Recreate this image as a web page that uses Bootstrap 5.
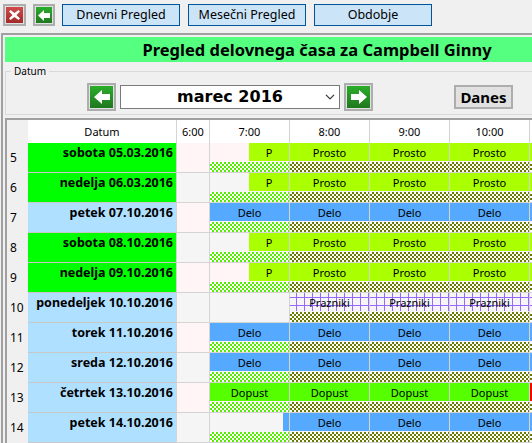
<!DOCTYPE html>
<html lang="sl">
<head>
<meta charset="utf-8">
<title>Pregled delovnega časa</title>
<link rel="stylesheet" href="https://cdn.jsdelivr.net/npm/bootstrap@5.3.0/dist/css/bootstrap.min.css">
<style>
html,body{height:443px;overflow:hidden}
body{background:#f0f0f0;font-family:"Noto Sans",sans-serif;font-size:11px;color:#000;width:532px}
.toolbar{height:33px;padding:4px 0 0 3px}
.icon-tile{display:flex;align-items:center;justify-content:center;border:2px solid #adadad;padding:1px;background:#e1e1e1;border-radius:0}
.icon-tile span{display:flex;align-items:center;justify-content:center;width:100%;height:100%}
.tile-close{width:23px;height:22px;margin-right:7px}
.tile-close span{background:linear-gradient(#d24a4a,#a32a2a)}
.tile-back{width:22px;height:22px;margin-right:7px}
.tile-back span,.tile-nav span{background:linear-gradient(#2bad2b,#1f781f)}
.view-btn{width:118px;height:22px;margin-right:8px;padding:0;background:#cce4f7;border:1px solid #005499;border-radius:0;color:#000;font-size:12.500px;line-height:18px;font-family:"Noto Sans",sans-serif}
.frame{border-top:2px solid #a0a0a0;border-left:2px solid #a0a0a0;margin-left:1px;padding:2px 0 0 2px}
.title-strip{height:25px;background:#55ff80;font-weight:700;font-size:16.500px;line-height:25px;text-align:center;padding-left:97px;white-space:nowrap}
.date-set{margin:3px 0 0;border:1px solid #d9d9d9;border-right:0;height:50px;padding:0;min-width:0;display:block}
.date-set legend{float:none;width:auto;font-size:10px;line-height:13px;margin:0 0 0 5px;padding:0 3px}
.nav-line{height:30px;margin-top:4px;padding-left:81px}
.tile-nav{width:29px;height:28px}
.month-pick{width:220px;height:24px;margin:0 4px;padding:0;border:1px solid #7a7a7a;border-radius:0;font-family:"DejaVu Sans",sans-serif;font-weight:700;font-size:16px;line-height:22px;text-align:center;text-align-last:center;color:#000;background-position:right 3px center;background-size:12px 10px}
.today-btn{width:59px;height:24px;margin-left:81px;padding:0;background:#e1e1e1;border:2px solid #adadad;border-radius:0;font-family:"Noto Sans",sans-serif;font-weight:700;font-size:15px;line-height:19px;color:#000}
.sched{margin:3px 0 0;border-top:2px solid #a0a0a0;border-left:2px solid #a0a0a0;height:326px}
.sched-row{display:grid;grid-template-columns:21px 149px 33px 80px 80px 80px 80px 3px;height:30px}
.sched-row.head{height:23px}
.hd{background:#fff;border-right:1px solid #d4d4d4;text-align:center;line-height:23px;font-size:11px}
.hd0{background:#f0f0f0;border-right:0}
.num{font-size:12px;padding:8px 0 0 3px;line-height:14px}
.day{border-right:1px solid #d4d4d4;border-bottom:1px solid #c8c8c8;font-weight:700;font-size:12.500px;line-height:15px;padding:2px 3px 0 0;text-align:right;white-space:nowrap;overflow:hidden}
.day-w{background:#00ff00}
.day-b{background:#b0e0ff}
.slot{border-right:1px solid #d4d4d4;border-bottom:1px solid #d4d4d4;display:flex;flex-direction:column;overflow:hidden;min-width:0}
.slot-end{border-right:0}
.pink .slot{background:#fff5f7}
.grey .slot{background:#f5f5f5}
.bar{height:18px;line-height:19px;text-align:center;white-space:nowrap;font-size:11px}
.bar-free{background:#aaff00}
.bar-work{background:#55aaff}
.bar-off{background:#55ff00}
.bar-red{background:#ff0000}
.bar-hol{background-color:#f5f5f5;background-image:linear-gradient(90deg,#9966ff 1px,transparent 1px),linear-gradient(#9966ff 1px,transparent 1px);background-size:8px 100%,100% 8px;background-position:6px 0,0 4px}
.part{display:flex;height:18px}
.part .fill{flex:1 1 auto}
.part-p{width:40px}
.part-d{width:6px}
.hatch{height:10px;margin-top:auto;background-color:#fff;background-image:repeating-conic-gradient(var(--hc) 0 25%,#fff 0 50%);background-size:4px 4px}
.h-g{--hc:#55ee00}
.h-o{--hc:#6b7a00}
</style>
</head>
<body>
<div class="toolbar d-flex">
  <button type="button" class="icon-tile tile-close" aria-label="Zapri"><span><svg width="13" height="12" viewBox="0 0 13 12"><path d="M1 2.500 2.500 1l4 3 4-3L12 2.500 8.500 6l3.500 3.500L10.500 11l-4-3-4 3L1 9.500 4.500 6z" fill="#fff"/></svg></span></button>
  <button type="button" class="icon-tile tile-back" aria-label="Nazaj"><span><svg width="12" height="11" viewBox="0 0 12 11"><path d="M0 5.500 6 0v3h6v5H6v3z" fill="#fff"/></svg></span></button>
  <button type="button" class="view-btn">Dnevni Pregled</button>
  <button type="button" class="view-btn">Mesečni Pregled</button>
  <button type="button" class="view-btn">Obdobje</button>
</div>
<div class="frame">
  <div class="title-strip">Pregled delovnega časa za Campbell Ginny</div>
  <fieldset class="date-set">
    <legend>Datum</legend>
    <div class="nav-line d-flex align-items-center">
      <button type="button" class="icon-tile tile-nav" aria-label="Nazaj"><span><svg width="16" height="14" viewBox="0 0 16 14"><path d="M0 7 8 0v4h8v6H8v4z" fill="#fff"/></svg></span></button>
      <select class="form-select month-pick" aria-label="Mesec"><option>marec 2016</option></select>
      <button type="button" class="icon-tile tile-nav" aria-label="Naprej"><span><svg width="16" height="14" viewBox="0 0 16 14"><path d="M16 7 8 0v4H0v6h8v4z" fill="#fff"/></svg></span></button>
      <button type="button" class="today-btn">Danes</button>
    </div>
  </fieldset>
  <div class="sched">
    <div class="sched-row head">
      <div class="hd hd0"></div><div class="hd">Datum</div><div class="hd">6:00</div><div class="hd">7:00</div><div class="hd">8:00</div><div class="hd">9:00</div><div class="hd">10:00</div><div class="hd slot-end"></div>
    </div>
    <div class="sched-row pink">
      <div class="num">5</div><div class="day day-w">sobota 05.03.2016</div><div class="slot"></div>
      <div class="slot"><div class="part"><div class="fill"></div><div class="bar bar-free part-p">P</div></div><div class="hatch h-g"></div></div>
      <div class="slot"><div class="bar bar-free">Prosto</div><div class="hatch h-o"></div></div>
      <div class="slot"><div class="bar bar-free">Prosto</div><div class="hatch h-o"></div></div>
      <div class="slot"><div class="bar bar-free">Prosto</div><div class="hatch h-o"></div></div>
      <div class="slot slot-end"><div class="bar bar-free"></div><div class="hatch h-o"></div></div>
    </div>
    <div class="sched-row grey">
      <div class="num">6</div><div class="day day-w">nedelja 06.03.2016</div><div class="slot"></div>
      <div class="slot"><div class="part"><div class="fill"></div><div class="bar bar-free part-p">P</div></div><div class="hatch h-g"></div></div>
      <div class="slot"><div class="bar bar-free">Prosto</div><div class="hatch h-o"></div></div>
      <div class="slot"><div class="bar bar-free">Prosto</div><div class="hatch h-o"></div></div>
      <div class="slot"><div class="bar bar-free">Prosto</div><div class="hatch h-o"></div></div>
      <div class="slot slot-end"><div class="bar bar-free"></div><div class="hatch h-o"></div></div>
    </div>
    <div class="sched-row pink">
      <div class="num">7</div><div class="day day-b">petek 07.10.2016</div><div class="slot"></div>
      <div class="slot"><div class="bar bar-work">Delo</div><div class="hatch h-g"></div></div>
      <div class="slot"><div class="bar bar-work">Delo</div><div class="hatch h-o"></div></div>
      <div class="slot"><div class="bar bar-work">Delo</div><div class="hatch h-o"></div></div>
      <div class="slot"><div class="bar bar-work">Delo</div><div class="hatch h-o"></div></div>
      <div class="slot slot-end"><div class="bar bar-work"></div><div class="hatch h-o"></div></div>
    </div>
    <div class="sched-row grey">
      <div class="num">8</div><div class="day day-w">sobota 08.10.2016</div><div class="slot"></div>
      <div class="slot"><div class="part"><div class="fill"></div><div class="bar bar-free part-p">P</div></div><div class="hatch h-g"></div></div>
      <div class="slot"><div class="bar bar-free">Prosto</div><div class="hatch h-o"></div></div>
      <div class="slot"><div class="bar bar-free">Prosto</div><div class="hatch h-o"></div></div>
      <div class="slot"><div class="bar bar-free">Prosto</div><div class="hatch h-o"></div></div>
      <div class="slot slot-end"><div class="bar bar-free"></div><div class="hatch h-o"></div></div>
    </div>
    <div class="sched-row pink">
      <div class="num">9</div><div class="day day-w">nedelja 09.10.2016</div><div class="slot"></div>
      <div class="slot"><div class="part"><div class="fill"></div><div class="bar bar-free part-p">P</div></div><div class="hatch h-g"></div></div>
      <div class="slot"><div class="bar bar-free">Prosto</div><div class="hatch h-o"></div></div>
      <div class="slot"><div class="bar bar-free">Prosto</div><div class="hatch h-o"></div></div>
      <div class="slot"><div class="bar bar-free">Prosto</div><div class="hatch h-o"></div></div>
      <div class="slot slot-end"><div class="bar bar-free"></div><div class="hatch h-o"></div></div>
    </div>
    <div class="sched-row grey">
      <div class="num">10</div><div class="day day-b">ponedeljek 10.10.2016</div><div class="slot"></div>
      <div class="slot"></div>
      <div class="slot"><div class="bar bar-hol">Prazniki</div><div class="hatch h-o"></div></div>
      <div class="slot"><div class="bar bar-hol">Prazniki</div><div class="hatch h-o"></div></div>
      <div class="slot"><div class="bar bar-hol">Prazniki</div><div class="hatch h-o"></div></div>
      <div class="slot slot-end"><div class="bar bar-hol"></div><div class="hatch h-o"></div></div>
    </div>
    <div class="sched-row pink">
      <div class="num">11</div><div class="day day-b">torek 11.10.2016</div><div class="slot"></div>
      <div class="slot"><div class="bar bar-work">Delo</div><div class="hatch h-g"></div></div>
      <div class="slot"><div class="bar bar-work">Delo</div><div class="hatch h-o"></div></div>
      <div class="slot"><div class="bar bar-work">Delo</div><div class="hatch h-o"></div></div>
      <div class="slot"><div class="bar bar-work">Delo</div><div class="hatch h-o"></div></div>
      <div class="slot slot-end"><div class="bar bar-work"></div><div class="hatch h-o"></div></div>
    </div>
    <div class="sched-row grey">
      <div class="num">12</div><div class="day day-b">sreda 12.10.2016</div><div class="slot"></div>
      <div class="slot"><div class="bar bar-work">Delo</div><div class="hatch h-g"></div></div>
      <div class="slot"><div class="bar bar-work">Delo</div><div class="hatch h-o"></div></div>
      <div class="slot"><div class="bar bar-work">Delo</div><div class="hatch h-o"></div></div>
      <div class="slot"><div class="bar bar-work">Delo</div><div class="hatch h-o"></div></div>
      <div class="slot slot-end"><div class="bar bar-work"></div><div class="hatch h-o"></div></div>
    </div>
    <div class="sched-row pink">
      <div class="num">13</div><div class="day day-b">četrtek 13.10.2016</div><div class="slot"></div>
      <div class="slot"><div class="bar bar-off">Dopust</div><div class="hatch h-g"></div></div>
      <div class="slot"><div class="bar bar-off">Dopust</div><div class="hatch h-o"></div></div>
      <div class="slot"><div class="bar bar-off">Dopust</div><div class="hatch h-o"></div></div>
      <div class="slot"><div class="bar bar-off">Dopust</div><div class="hatch h-o"></div></div>
      <div class="slot slot-end"><div class="bar bar-red"></div><div class="hatch h-o"></div></div>
    </div>
    <div class="sched-row grey">
      <div class="num">14</div><div class="day day-b">petek 14.10.2016</div><div class="slot"></div>
      <div class="slot"><div class="part"><div class="fill"></div><div class="bar bar-work part-d"></div></div><div class="hatch h-g"></div></div>
      <div class="slot"><div class="bar bar-work">Delo</div><div class="hatch h-o"></div></div>
      <div class="slot"><div class="bar bar-work">Delo</div><div class="hatch h-o"></div></div>
      <div class="slot"><div class="bar bar-work">Delo</div><div class="hatch h-o"></div></div>
      <div class="slot slot-end"><div class="bar bar-work"></div><div class="hatch h-o"></div></div>
    </div>
  </div>
</div>
<script src="https://cdn.jsdelivr.net/npm/bootstrap@5.3.0/dist/js/bootstrap.bundle.min.js"></script>
</body>
</html>
